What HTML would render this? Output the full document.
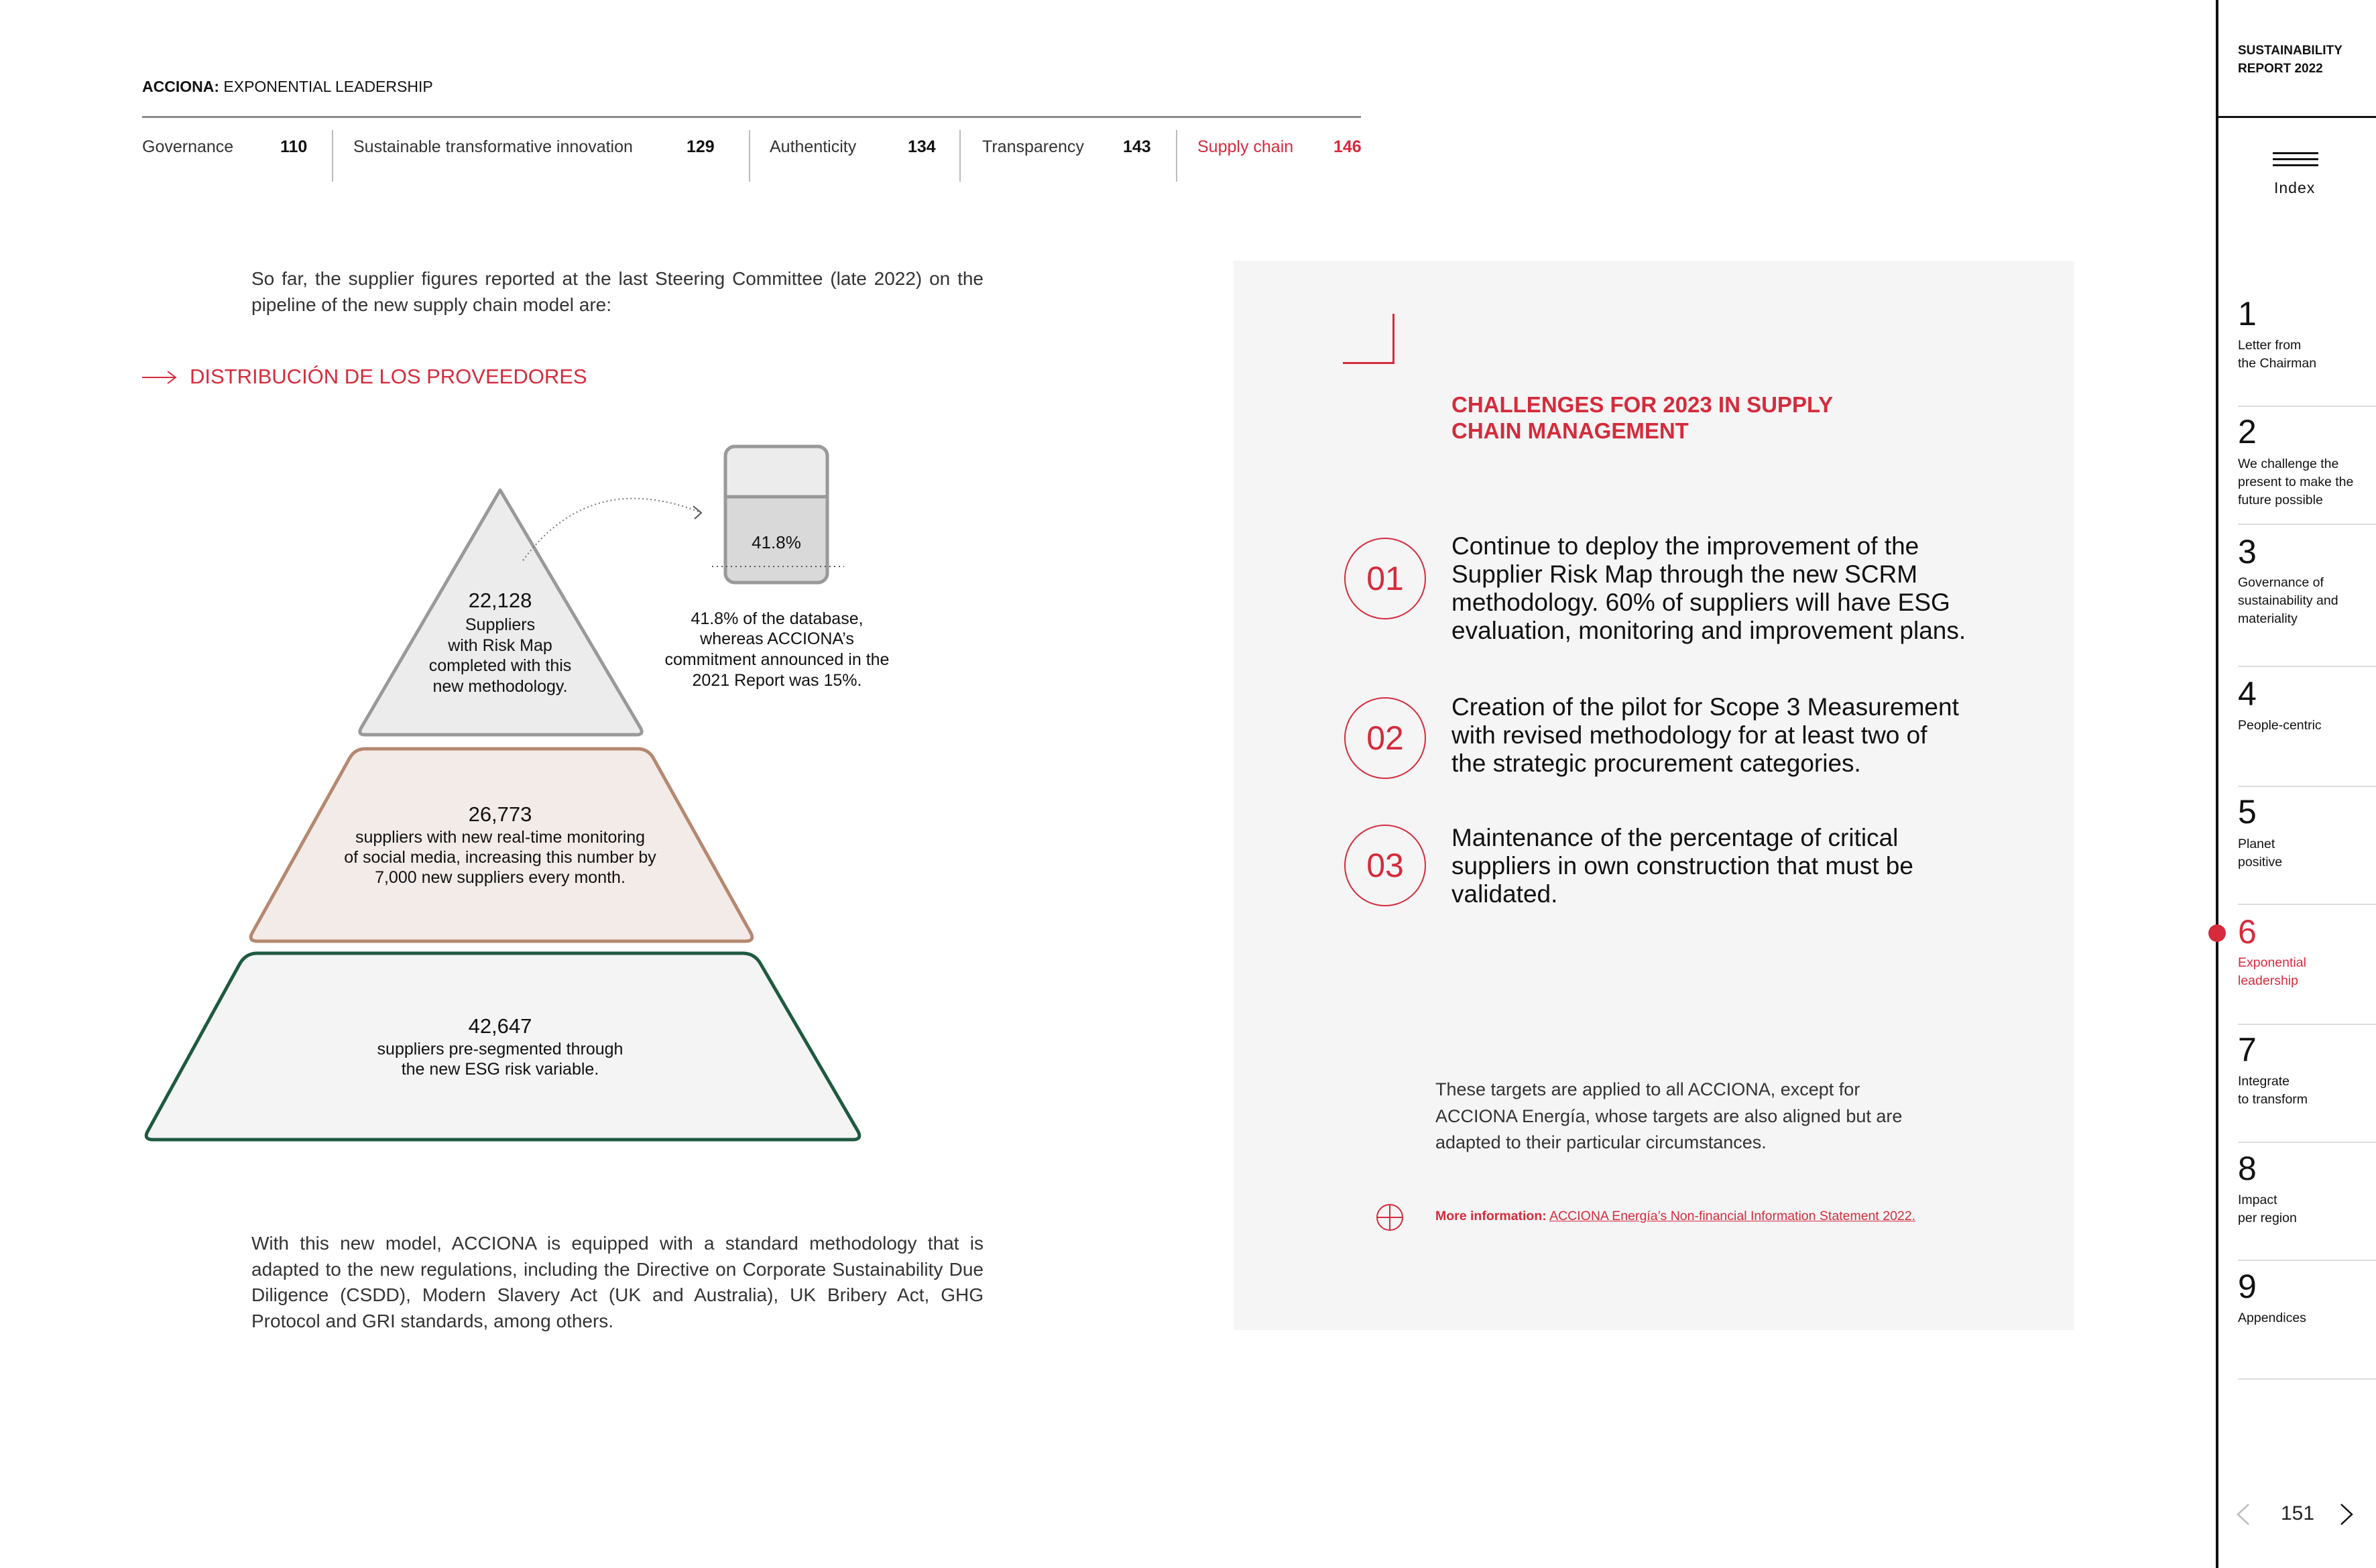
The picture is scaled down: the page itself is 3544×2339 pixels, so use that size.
<!DOCTYPE html>
<html><head><meta charset="utf-8"><style>
*{margin:0;padding:0;box-sizing:border-box}
body{width:3544px;height:2339px;position:relative;background:#fff;font-family:"Liberation Sans",sans-serif;color:#222;overflow:hidden}
.a{position:absolute;white-space:nowrap}
.tab{position:absolute;top:205px;font-size:25px;color:#333}
.num{font-weight:bold;color:#111}
.sep{position:absolute;top:194px;width:2px;height:77px;background:#bbb}
.p{position:absolute;font-size:28px;line-height:38.5px;color:#333;text-align:justify;white-space:normal}
.circ{position:absolute;width:122px;height:122px;border:2px solid #d52b3c;border-radius:50%;color:#d52b3c;font-size:50px;text-align:center;line-height:118px}
.item{position:absolute;left:2165px;font-size:37px;line-height:42px;color:#111;white-space:nowrap}
.sn{position:absolute;left:3338px;font-size:50px;font-weight:300;color:#111;line-height:50px}
.sl{position:absolute;left:3338px;font-size:19.5px;line-height:27px;color:#111;white-space:nowrap}
.sh{position:absolute;left:3338px;width:206px;height:2px;background:#ddd}
.red{color:#d52b3c !important}
</style></head><body>

<div class="a" style="left:212px;top:116px;font-size:23px;color:#111"><b>ACCIONA:</b> EXPONENTIAL LEADERSHIP</div>
<div class="a" style="left:212px;top:173px;width:1818px;height:3px;background:#8a8a8a"></div>

<div class="tab" style="left:212px">Governance</div><div class="tab num" style="left:418px">110</div>
<div class="sep" style="left:495px"></div>
<div class="tab" style="left:527px">Sustainable transformative innovation</div><div class="tab num" style="left:1024px">129</div>
<div class="sep" style="left:1117px"></div>
<div class="tab" style="left:1148px">Authenticity</div><div class="tab num" style="left:1354px">134</div>
<div class="sep" style="left:1431px"></div>
<div class="tab" style="left:1465px">Transparency</div><div class="tab num" style="left:1675px">143</div>
<div class="sep" style="left:1754px"></div>
<div class="tab red" style="left:1786px">Supply chain</div><div class="tab num red" style="left:1989px">146</div>

<div class="p" style="left:375px;top:397px;width:1092px">So far, the supplier figures reported at the last Steering Committee (late 2022) on the pipeline of the new supply chain model are:</div>

<svg class="a" style="left:210px;top:550px" width="60" height="26"><path d="M2 13H50M40 4L52 13L40 22" fill="none" stroke="#d52b3c" stroke-width="2"/></svg>
<div class="a red" style="left:283px;top:544px;font-size:31px">DISTRIBUCIÓN DE LOS PROVEEDORES</div>

<svg class="a" style="left:0;top:0" width="1700" height="1750">
<path d="M746 731 L956 1087 Q960 1096 950 1096 L544 1096 Q534 1096 538 1087 Z" fill="#ececec" stroke="#999" stroke-width="5" stroke-linejoin="round"/>
<path d="M545 1117 L951 1117 Q966 1117 974 1130 L1120 1392 Q1126 1404 1112 1404 L384 1404 Q370 1404 376 1392 L522 1130 Q530 1117 545 1117 Z" fill="#f3ebe8" stroke="#b58870" stroke-width="5"/>
<path d="M384 1422 L1108 1422 Q1125 1422 1134 1437 L1280 1688 Q1286 1700 1272 1700 L228 1700 Q214 1700 220 1688 L358 1437 Q367 1422 384 1422 Z" fill="#f4f4f4" stroke="#1e5a40" stroke-width="5"/>
<path d="M780 836 Q880 700 1044 764" fill="none" stroke="#777" stroke-width="2" stroke-dasharray="2 4"/>
<path d="M1034 755 L1046 765 L1036 774" fill="none" stroke="#555" stroke-width="2"/>
<rect x="1082" y="666" width="152" height="203" rx="14" fill="#ececec" stroke="#999" stroke-width="5"/>
<path d="M1084 741 H1232 V855 Q1232 867 1220 867 H1096 Q1084 867 1084 855 Z" fill="#d9d9d9"/>
<rect x="1082" y="666" width="152" height="203" rx="14" fill="none" stroke="#999" stroke-width="5"/>
<line x1="1084" y1="741" x2="1232" y2="741" stroke="#999" stroke-width="5"/>
<line x1="1062" y1="845" x2="1259" y2="845" stroke="#555" stroke-width="2" stroke-dasharray="2 5"/>
<g font-family="Liberation Sans" fill="#111" text-anchor="middle">
<text x="1158" y="818" font-size="26">41.8%</text>
<text x="746" y="906" font-size="31">22,128</text>
<g font-size="25"><text x="746" y="940">Suppliers</text><text x="746" y="971">with Risk Map</text><text x="746" y="1001">completed with this</text><text x="746" y="1032">new methodology.</text>
<text x="1159" y="931">41.8% of the database,</text><text x="1159" y="961">whereas ACCIONA’s</text><text x="1159" y="992">commitment announced in the</text><text x="1159" y="1023">2021 Report was 15%.</text></g>
<text x="746" y="1225" font-size="31">26,773</text>
<g font-size="25"><text x="746" y="1257">suppliers with new real-time monitoring</text><text x="746" y="1287">of social media, increasing this number by</text><text x="746" y="1317">7,000 new suppliers every month.</text></g>
<text x="746" y="1541" font-size="31">42,647</text>
<g font-size="25"><text x="746" y="1573">suppliers pre-segmented through</text><text x="746" y="1603">the new ESG risk variable.</text></g>
</g></svg>

<div class="p" style="left:375px;top:1836px;width:1092px">With this new model, ACCIONA is equipped with a standard methodology that is adapted to the new regulations, including the Directive on Corporate Sustainability Due Diligence (CSDD), Modern Slavery Act (UK and Australia), UK Bribery Act, GHG Protocol and GRI standards, among others.</div>

<div class="a" style="left:1840px;top:389px;width:1254px;height:1595px;background:#f5f5f5"></div>
<div class="a" style="left:2077px;top:468px;width:3px;height:75px;background:#d52b3c"></div>
<div class="a" style="left:2003px;top:540px;width:77px;height:3px;background:#d52b3c"></div>
<div class="a red" style="left:2165px;top:584px;font-size:33px;font-weight:bold;line-height:39px">CHALLENGES FOR 2023 IN SUPPLY<br>CHAIN MANAGEMENT</div>

<div class="circ" style="left:2005px;top:802px">01</div>
<div class="item" style="top:794px">Continue to deploy the improvement of the<br>Supplier Risk Map through the new SCRM<br>methodology. 60% of suppliers will have ESG<br>evaluation, monitoring and improvement plans.</div>
<div class="circ" style="left:2005px;top:1040px">02</div>
<div class="item" style="top:1034px">Creation of the pilot for Scope 3 Measurement<br>with revised methodology for at least two of<br>the strategic procurement categories.</div>
<div class="circ" style="left:2005px;top:1230px">03</div>
<div class="item" style="top:1229px">Maintenance of the percentage of critical<br>suppliers in own construction that must be<br>validated.</div>

<div class="a" style="left:2141px;top:1606px;font-size:27px;line-height:39.5px;color:#333">These targets are applied to all ACCIONA, except for<br>ACCIONA Energía, whose targets are also aligned but are<br>adapted to their particular circumstances.</div>
<svg class="a" style="left:2051px;top:1794px" width="44" height="44"><circle cx="22" cy="22" r="19" fill="none" stroke="#d52b3c" stroke-width="2"/><path d="M22 3V41M3 22H41" stroke="#d52b3c" stroke-width="2"/></svg>
<div class="a red" style="left:2141px;top:1803px;font-size:19.5px"><b>More information:</b> <span style="text-decoration:underline">ACCIONA Energía’s Non-financial Information Statement 2022.</span></div>

<!-- sidebar -->
<div class="a" style="left:3305px;top:0;width:4px;height:2339px;background:#111"></div>
<div class="a" style="left:3338px;top:62px;font-size:19px;font-weight:bold;line-height:27px;color:#111">SUSTAINABILITY<br>REPORT 2022</div>
<div class="a" style="left:3307px;top:173px;width:237px;height:3px;background:#111"></div>
<div class="a" style="left:3390px;top:227px;width:68px;height:3px;background:#111"></div>
<div class="a" style="left:3390px;top:236px;width:68px;height:3px;background:#111"></div>
<div class="a" style="left:3390px;top:245px;width:68px;height:3px;background:#111"></div>
<div class="a" style="left:3392px;top:267px;font-size:23px;color:#111;letter-spacing:1px">Index</div>

<div class="sn" style="top:443px">1</div><div class="sl" style="top:502px">Letter from<br>the Chairman</div>
<div class="sh" style="top:605px"></div>
<div class="sn" style="top:619px">2</div><div class="sl" style="top:679px">We challenge the<br>present to make the<br>future possible</div>
<div class="sh" style="top:781px"></div>
<div class="sn" style="top:798px">3</div><div class="sl" style="top:856px">Governance of<br>sustainability and<br>materiality</div>
<div class="sh" style="top:993px"></div>
<div class="sn" style="top:1010px">4</div><div class="sl" style="top:1069px">People-centric</div>
<div class="sh" style="top:1172px"></div>
<div class="sn" style="top:1186px">5</div><div class="sl" style="top:1246px">Planet<br>positive</div>
<div class="sh" style="top:1348px"></div>
<div class="a" style="left:3294px;top:1379px;width:26px;height:26px;border-radius:50%;background:#d52b3c"></div>
<div class="sn red" style="top:1365px">6</div><div class="sl red" style="top:1423px">Exponential<br>leadership</div>
<div class="sh" style="top:1527px"></div>
<div class="sn" style="top:1541px">7</div><div class="sl" style="top:1600px">Integrate<br>to transform</div>
<div class="sh" style="top:1703px"></div>
<div class="sn" style="top:1718px">8</div><div class="sl" style="top:1777px">Impact<br>per region</div>
<div class="sh" style="top:1879px"></div>
<div class="sn" style="top:1894px">9</div><div class="sl" style="top:1953px">Appendices</div>
<div class="sh" style="top:2056px"></div>

<svg class="a" style="left:3334px;top:2242px" width="24" height="34"><path d="M20 2L4 17L20 32" fill="none" stroke="#bbb" stroke-width="2.5"/></svg>
<div class="a" style="left:3402px;top:2241px;font-size:30px;color:#222">151</div>
<svg class="a" style="left:3488px;top:2242px" width="24" height="34"><path d="M4 2L20 17L4 32" fill="none" stroke="#111" stroke-width="2.5"/></svg>
</body></html>
